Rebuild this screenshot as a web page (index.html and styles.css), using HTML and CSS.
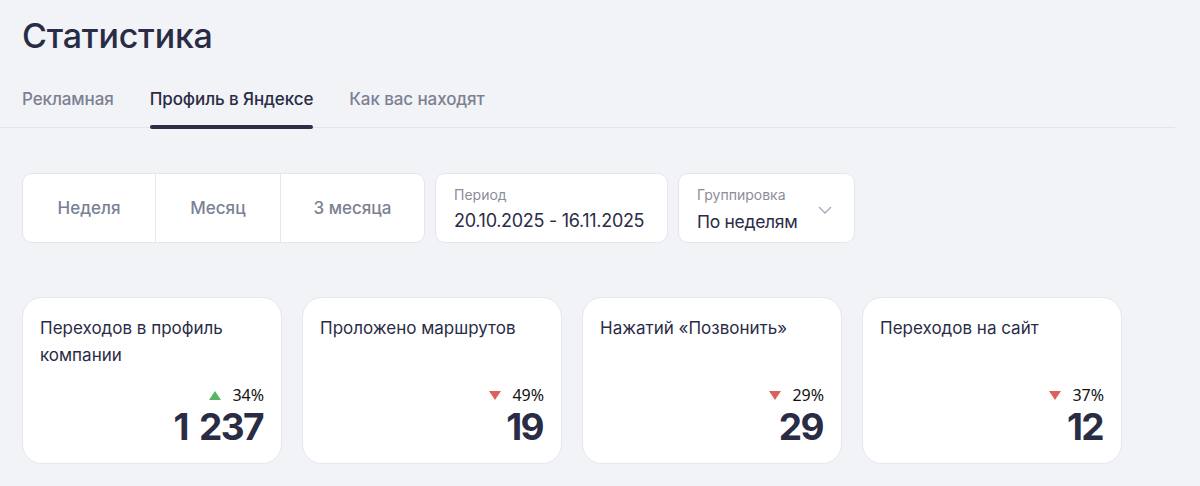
FILE: index.html
```html
<!DOCTYPE html>
<html lang="ru">
<head>
<meta charset="utf-8">
<title>Статистика</title>
<link rel="stylesheet" href="styles.css">
</head>
<body>
<div class="page">
  <h1 class="title">Статистика</h1>
  <nav class="tabs">
    <div class="tab">Рекламная</div>
    <div class="tab active">Профиль в Яндексе</div>
    <div class="tab">Как вас находят</div>
  </nav>
  <div class="filters">
    <div class="segments">
      <div class="seg seg-week">Неделя</div>
      <div class="seg seg-month">Месяц</div>
      <div class="seg seg-3m">3 месяца</div>
    </div>
    <div class="field field-period">
      <div class="field-label">Период</div>
      <div class="field-value">20.10.2025 - 16.11.2025</div>
    </div>
    <div class="field field-group">
      <div class="field-text">
        <div class="field-label">Группировка</div>
        <div class="field-value">По неделям</div>
      </div>
      <svg class="chev" width="14" height="8" viewBox="0 0 14 8"><path d="M1 1l6 6 6-6" fill="none" stroke="#a4a8b6" stroke-width="1.3"/></svg>
    </div>
  </div>
  <div class="cards">
    <div class="card">
      <div class="card-title">Переходов в профиль компании</div>
      <div class="card-bottom">
        <div class="delta"><span class="tri up"></span>34%</div>
        <div class="value">1 237</div>
      </div>
    </div>
    <div class="card">
      <div class="card-title">Проложено маршрутов</div>
      <div class="card-bottom">
        <div class="delta"><span class="tri down"></span>49%</div>
        <div class="value">19</div>
      </div>
    </div>
    <div class="card">
      <div class="card-title">Нажатий «Позвонить»</div>
      <div class="card-bottom">
        <div class="delta"><span class="tri down"></span>29%</div>
        <div class="value">29</div>
      </div>
    </div>
    <div class="card">
      <div class="card-title">Переходов на сайт</div>
      <div class="card-bottom">
        <div class="delta"><span class="tri down"></span>37%</div>
        <div class="value">12</div>
      </div>
    </div>
  </div>
</div>
</body>
</html>
```
FILE: styles.css
```css
* { box-sizing: border-box; }
html, body { margin: 0; padding: 0; }
body {
  background: #f2f3f7;
  font-family: Inter, "Noto Sans", sans-serif;
  color: #2b2d45;
  width: 1200px;
  height: 486px;
  overflow: hidden;
}
.page { padding: 0 0 0 22px; }
.title {
  margin: 0;
  padding-top: 15px;
  font-size: 34px;
  line-height: 42px;
  font-weight: 500;
  color: #2a2c46;
  letter-spacing: -0.2px;
}
.tabs {
  display: flex;
  gap: 36px;
  margin-top: 31px;
  margin-left: -22px;
  padding-left: 22px;
  width: 1175px;
  border-bottom: 1px solid #e2e4ea;
}
.tab {
  font-size: 17px;
  line-height: 22px;
  padding-bottom: 17px;
  color: #7b8194;
  font-weight: 500;
  letter-spacing: -0.1px;
  position: relative;
}
.tab.active { color: #2a2c46; }
.tab.active::after {
  content: "";
  position: absolute;
  left: 0; right: 0; bottom: -2px;
  height: 4px;
  border-radius: 2px;
  background: #2c2e48;
}
.filters {
  display: flex;
  gap: 10px;
  margin-top: 45px;
  height: 70px;
}
.segments {
  display: flex;
  background: #fff;
  border: 1px solid #e4e6ec;
  border-radius: 10px;
  width: 403px;
}
.seg {
  display: flex;
  align-items: center;
  justify-content: center;
  font-size: 17px;
  color: #7b8194;
  font-weight: 500;
}
.seg + .seg { border-left: 1px solid #e4e6ec; }
.seg-week { width: 132px; }
.seg-month { width: 125px; }
.seg-3m { flex: 1; }
.field {
  background: #fff;
  border: 1px solid #e4e6ec;
  border-radius: 10px;
  padding: 12px 18px 0 18px;
}
.field-period { width: 233px; }
.field-group {
  width: 177px;
  display: flex;
  justify-content: space-between;
  align-items: flex-start;
}
.field-label {
  font-size: 14px;
  line-height: 18px;
  color: #8a8e9c;
}
.field-value {
  font-size: 18px;
  line-height: 24px;
  margin-top: 5px;
  color: #2a2c46;
  white-space: nowrap;
  letter-spacing: -0.3px;
}
.field-group .field-value { margin-top: 6px; font-size: 17.5px; }
.chev { margin-top: 20px; margin-right: 4px; }
.cards {
  display: flex;
  gap: 20px;
  margin-top: 54px;
}
.card {
  width: 260px;
  height: 167px;
  background: #fff;
  border: 1px solid #e6e8ee;
  border-radius: 20px;
  padding: 17px 17px 0 17px;
  display: flex;
  flex-direction: column;
}
.card-title {
  font-size: 17px;
  line-height: 27px;
  color: #2a2c46;
  font-weight: 400;
  height: 54px;
}
.card-bottom {
  margin-top: 16px;
  display: flex;
  flex-direction: column;
  align-items: flex-end;
}
.delta {
  font-family: "Noto Sans", "Open Sans", sans-serif;
  font-size: 16px;
  line-height: 20px;
  color: #111;
  display: flex;
  align-items: center;
}
.tri {
  width: 0; height: 0;
  border-left: 6px solid transparent;
  border-right: 6px solid transparent;
  margin-right: 11px;
}
.tri.up { border-bottom: 9px solid #58b563; }
.tri.down { border-top: 9px solid #d9635a; }
.value {
  font-size: 37px;
  line-height: 44px;
  font-weight: 700;
  color: #2a2c46;
  letter-spacing: -1.6px;
  word-spacing: 4px;
  margin-right: 1px;
}
```
